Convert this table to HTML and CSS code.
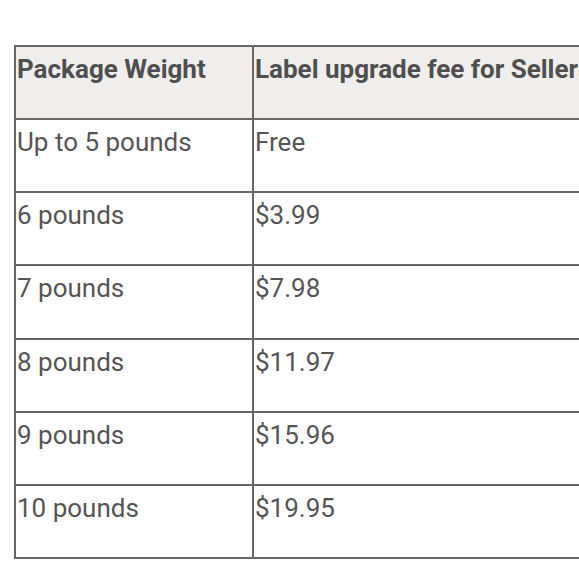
FILE: index.html
```html
<!DOCTYPE html>
<html>
<head>
<meta charset="utf-8">
<link rel="stylesheet" href="styles.css">
</head>
<body>
<div class="wrap">
<table class="fees">
  <thead>
    <tr><th class="c1">Package Weight</th><th class="c2">Label upgrade fee for Sellers</th></tr>
  </thead>
  <tbody>
    <tr><td class="c1">Up to 5 pounds</td><td class="c2">Free</td></tr>
    <tr><td class="c1">6 pounds</td><td class="c2">$3.99</td></tr>
    <tr><td class="c1">7 pounds</td><td class="c2">$7.98</td></tr>
    <tr><td class="c1">8 pounds</td><td class="c2">$11.97</td></tr>
    <tr><td class="c1">9 pounds</td><td class="c2">$15.96</td></tr>
    <tr><td class="c1">10 pounds</td><td class="c2">$19.95</td></tr>
  </tbody>
</table>
</div>
</body>
</html>
```
FILE: styles.css
```css
html, body {
  margin: 0;
  padding: 0;
  background: #ffffff;
  overflow: hidden;
}
.wrap {
  padding: 45px 0 0 14px;
  width: 900px;
}
.fees {
  border-collapse: collapse;
  font-family: Roboto, "Liberation Sans", sans-serif;
  font-size: 26px;
  color: #555555;
  table-layout: fixed;
  width: 800px;
}
.fees th, .fees td {
  border: 2px solid #666666;
  text-align: left;
  vertical-align: top;
  line-height: 30px;
  padding: 7px 2px 34.14px 1px;
}
.fees th {
  background: #efeeec;
  font-weight: 700;
  color: #4f4f4f;
}
.c1 { width: 233px; }
.c2 { width: 562px; }
```
